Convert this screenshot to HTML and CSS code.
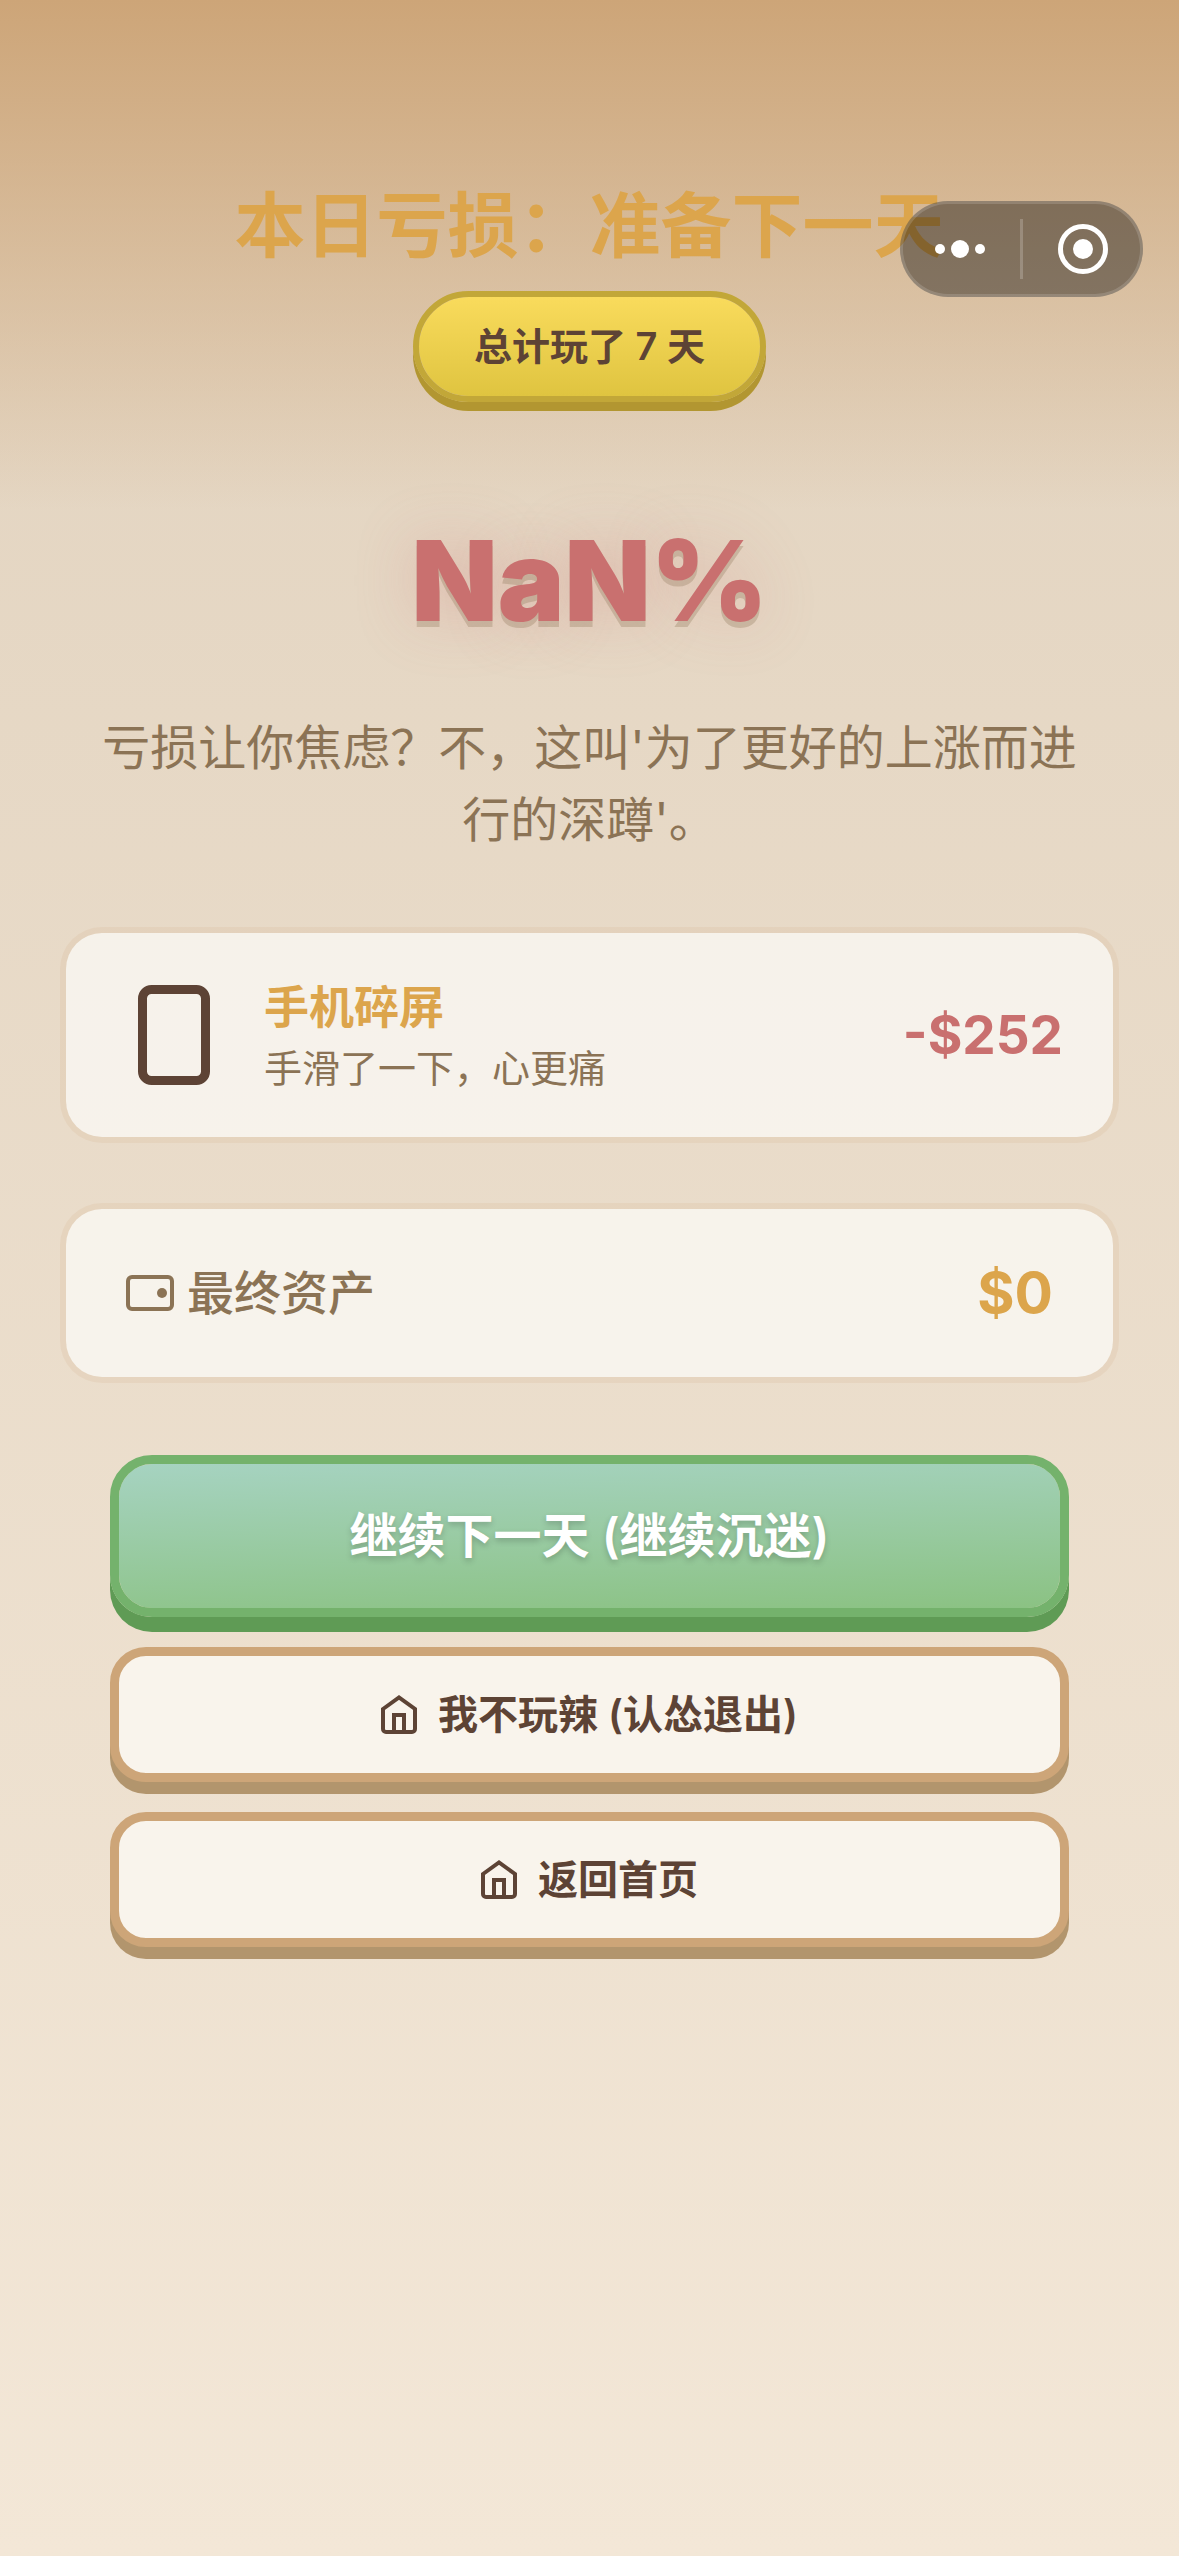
FILE: index.html
```html
<!DOCTYPE html>
<html lang="zh-CN">
<head>
<meta charset="utf-8">
<meta name="viewport" content="width=device-width, initial-scale=1">
<title>本日亏损</title>
<link rel="stylesheet" href="styles.css">
</head>
<body>
<div class="capsule">
  <button class="capsule-btn" type="button" aria-label="更多">
    <svg width="50" height="50" viewBox="0 0 50 50" fill="#fff"><circle cx="5" cy="25" r="5"/><circle cx="25" cy="25" r="9"/><circle cx="45" cy="25" r="5"/></svg>
  </button>
  <span class="capsule-line"></span>
  <button class="capsule-btn" type="button" aria-label="关闭">
    <svg width="50" height="50" viewBox="0 0 50 50"><circle cx="25" cy="25" r="22.5" fill="none" stroke="#fff" stroke-width="5"/><circle cx="25" cy="25" r="10" fill="#fff"/></svg>
  </button>
</div>
<main class="page">
  <header class="header">
    <h1 class="title">本日亏损：准备下一天</h1>
    <div class="days">总计玩了 7 天</div>
  </header>
  <div class="percent">NaN%</div>
  <p class="message">亏损让你焦虑？不，这叫'为了更好的上涨而进行的深蹲'。</p>
  <section class="card event">
    <svg class="event-icon" width="72" height="100" viewBox="0 0 72 100"><rect x="4.5" y="4.5" width="63" height="91" rx="9" fill="none" stroke="#5d4335" stroke-width="9"/></svg>
    <div class="event-text">
      <h2 class="event-title">手机碎屏</h2>
      <p class="event-desc">手滑了一下，心更痛</p>
    </div>
    <div class="event-amount">-$252</div>
  </section>
  <section class="card asset">
    <svg class="asset-icon" width="48" height="36" viewBox="0 0 48 36"><rect x="2" y="2" width="44" height="32" rx="4" fill="none" stroke="#8b7355" stroke-width="4"/><circle cx="36" cy="18" r="5" fill="#8b7355"/></svg>
    <span class="asset-label">最终资产</span>
    <span class="asset-value">$0</span>
  </section>
  <div class="actions">
    <button class="btn primary" type="button">继续下一天 (继续沉迷)</button>
    <button class="btn secondary" type="button">
      <svg width="36" height="39" viewBox="0 0 36 39" fill="none" stroke="#5d4335" stroke-width="4"><path d="M2 14 18 2.500 34 14V34a3 3 0 0 1-3 3H5a3 3 0 0 1-3-3Z"/><path d="M13 37V20H23V37"/></svg>
      我不玩辣 (认怂退出)
    </button>
    <button class="btn secondary" type="button">
      <svg width="36" height="39" viewBox="0 0 36 39" fill="none" stroke="#5d4335" stroke-width="4"><path d="M2 14 18 2.500 34 14V34a3 3 0 0 1-3 3H5a3 3 0 0 1-3-3Z"/><path d="M13 37V20H23V37"/></svg>
      返回首页
    </button>
  </div>
</main>
</body>
</html>
```
FILE: styles.css
```css
* {
  box-sizing: border-box;
}

html {
  min-height: 100%;
}

body {
  margin: 0;
  min-height: 100vh;
  font-family: Inter, "Noto Sans CJK SC", sans-serif;
  color: #5d4335;
  background:
    linear-gradient(180deg, #cda578 0, rgba(205, 165, 120, 0) 510px),
    linear-gradient(180deg, #e1d2be 0%, #f3e7d7 100%);
}

h1, h2, p {
  margin: 0;
}

button {
  font-family: inherit;
  cursor: pointer;
}

svg {
  display: block;
  flex: none;
}

.capsule {
  position: absolute;
  top: 201px;
  right: 36px;
  width: 243px;
  height: 96px;
  display: flex;
  align-items: center;
  border-radius: 48px;
  background: rgba(0, 0, 0, 0.4);
  box-shadow: inset 0 0 0 3px rgba(255, 255, 255, 0.15);
  z-index: 1;
}

.capsule-btn {
  flex: 1;
  display: flex;
  justify-content: center;
  padding: 0;
  border: 0;
  background: none;
}

.capsule-line {
  width: 3px;
  height: 60px;
  background: rgba(255, 255, 255, 0.2);
}

.page {
  display: flex;
  flex-direction: column;
  padding: 180px 60px 60px;
}

.header {
  display: flex;
  flex-direction: column;
  align-items: center;
  gap: 21px;
}

.title {
  font-size: 71px;
  line-height: 90px;
  font-weight: 600;
  color: #dca54c;
}

.days {
  padding: 24px 55px;
  border: 6px solid #c2a738;
  border-radius: 56px;
  background: linear-gradient(180deg, #f9db5c, #dfc440) padding-box;
  box-shadow: 0 9px 0 #b29631;
  font-size: 38px;
  line-height: 51px;
  font-weight: 600;
}

.percent {
  margin-top: 109px;
  text-align: center;
  font-size: 112px;
  line-height: 138px;
  font-weight: 900;
  color: #c9706f;
  text-shadow: 0 6px 0 rgba(139, 115, 85, 0.3), 0 0 60px rgba(201, 112, 111, 0.3);
}

.message {
  margin-top: 63px;
  padding: 0 30px;
  text-align: center;
  font-size: 48px;
  line-height: 72px;
  color: #8b7355;
}

.card {
  display: flex;
  align-items: center;
  border: 6px solid rgba(205, 165, 120, 0.14);
  border-radius: 42px;
  background: rgba(252, 252, 250, 0.7) padding-box;
}

.event {
  margin-top: 71px;
  min-height: 216px;
  padding: 30px 50px 30px 72px;
}

.event-text {
  flex: 1;
  margin-left: 54px;
}

.event-title {
  font-size: 45px;
  line-height: 66px;
  font-weight: 600;
  color: #dca54c;
}

.event-desc {
  font-size: 38px;
  line-height: 54px;
  color: #8b7355;
}

.event-amount {
  font-size: 53px;
  line-height: 66px;
  font-weight: 700;
  color: #c9706f;
}

.asset {
  margin-top: 60px;
  min-height: 180px;
  padding: 30px 60px;
}

.asset-label {
  flex: 1;
  margin-left: 13px;
  font-size: 47px;
  line-height: 66px;
  font-weight: 500;
  color: #8b7355;
}

.asset-value {
  font-size: 57px;
  line-height: 66px;
  font-weight: 700;
  color: #dca54c;
}

.actions {
  display: flex;
  flex-direction: column;
  gap: 30px;
  margin: 72px 50px 0;
}

.btn {
  display: flex;
  align-items: center;
  justify-content: center;
  gap: 21px;
  width: 100%;
  font-weight: 600;
}

.primary {
  min-height: 162px;
  border: 9px solid #74b26c;
  border-radius: 42px;
  background: linear-gradient(178deg, #a6d3c1, #8bc283) padding-box;
  box-shadow: 0 15px 0 #5f9b55;
  color: #fff;
  font-size: 48px;
  line-height: 66px;
  text-shadow: 0 3px 6px rgba(0, 0, 0, 0.2);
}

.secondary {
  min-height: 135px;
  border: 9px solid #cda578;
  border-radius: 36px;
  background: #f9f4ec;
  box-shadow: 0 12px 0 #b2956d;
  color: #5d4335;
  font-size: 40px;
  line-height: 54px;
}
```
